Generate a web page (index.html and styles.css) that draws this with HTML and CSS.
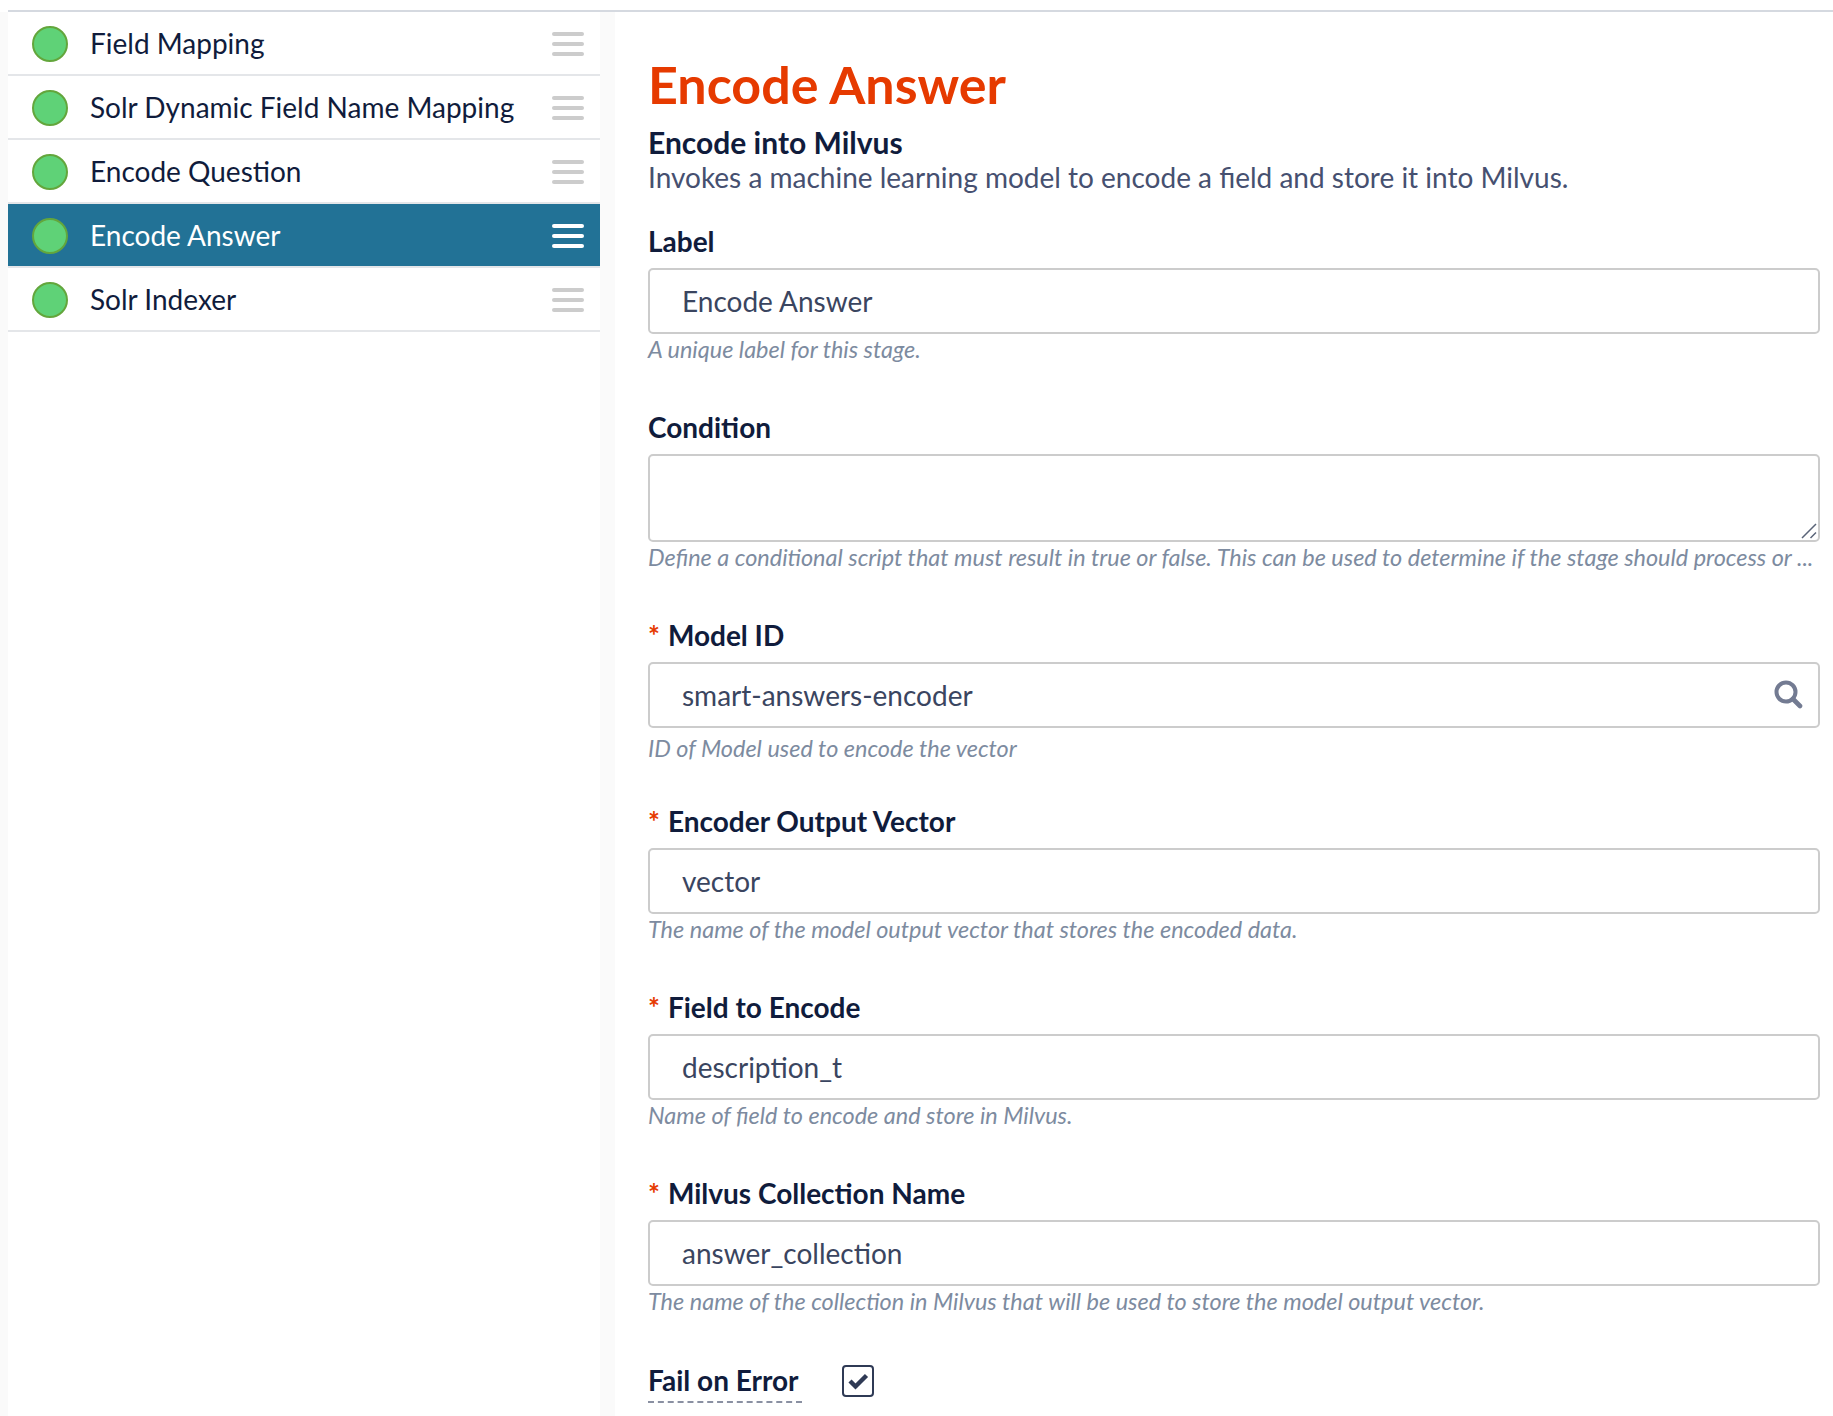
FILE: index.html
```html
<!DOCTYPE html>
<html lang="en">
<head>
    <meta charset="UTF-8">
    <title>Encode Answer</title>
    <link rel="stylesheet" href="styles.css">
</head>
<body>
    <div class="topline"></div>
    <div class="page">
        <div class="sidebar">
            <ul class="stages">
                <li class="stage">
                    <span class="dot"></span>
                    <span class="stage-name">Field Mapping</span>
                    <span class="handle"><i></i><i></i><i></i></span>
                </li>
                <li class="stage">
                    <span class="dot"></span>
                    <span class="stage-name">Solr Dynamic Field Name Mapping</span>
                    <span class="handle"><i></i><i></i><i></i></span>
                </li>
                <li class="stage">
                    <span class="dot"></span>
                    <span class="stage-name">Encode Question</span>
                    <span class="handle"><i></i><i></i><i></i></span>
                </li>
                <li class="stage active">
                    <span class="dot"></span>
                    <span class="stage-name">Encode Answer</span>
                    <span class="handle"><i></i><i></i><i></i></span>
                </li>
                <li class="stage">
                    <span class="dot"></span>
                    <span class="stage-name">Solr Indexer</span>
                    <span class="handle"><i></i><i></i><i></i></span>
                </li>
            </ul>
        </div>
        <div class="main">
            <h1 class="title">Encode Answer</h1>
            <h3 class="subtitle">Encode into Milvus</h3>
            <p class="desc">Invokes a machine learning model to encode a field and store it into Milvus.</p>

            <div class="field">
                <label class="label">Label</label>
                <div class="input">Encode Answer</div>
                <p class="help">A unique label for this stage.</p>
            </div>

            <div class="field">
                <label class="label">Condition</label>
                <div class="input textarea">
                    <svg class="grip" width="16" height="16" viewBox="0 0 16 16">
                        <path d="M1 15 L15 1 M9.5 15 L15 9.5" stroke="#5a6478" stroke-width="1.5" fill="none"/>
                    </svg>
                </div>
                <p class="help">Define a conditional script that must result in true or false. This can be used to determine if the stage should process or ...</p>
            </div>

            <div class="field">
                <label class="label"><span class="req">*</span>Model ID</label>
                <div class="input">
                    smart-answers-encoder
                    <svg class="search" width="30" height="30" viewBox="0 0 30 30">
                        <circle cx="13" cy="13" r="9.5" stroke="#737b92" stroke-width="4" fill="none"/>
                        <path d="M20 20 L27 27" stroke="#737b92" stroke-width="4.6" stroke-linecap="round"/>
                    </svg>
                </div>
                <p class="help low">ID of Model used to encode the vector</p>
            </div>

            <div class="field">
                <label class="label"><span class="req">*</span>Encoder Output Vector</label>
                <div class="input">vector</div>
                <p class="help">The name of the model output vector that stores the encoded data.</p>
            </div>

            <div class="field">
                <label class="label"><span class="req">*</span>Field to Encode</label>
                <div class="input">description_t</div>
                <p class="help">Name of field to encode and store in Milvus.</p>
            </div>

            <div class="field">
                <label class="label"><span class="req">*</span>Milvus Collection Name</label>
                <div class="input">answer_collection</div>
                <p class="help">The name of the collection in Milvus that will be used to store the model output vector.</p>
            </div>

            <div class="check-row">
                <span class="check-label">Fail on Error</span>
                <span class="checkbox">
                    <svg width="22" height="18" viewBox="0 0 22 18">
                        <path d="M3 9 L8.5 14.5 L19.5 3.5" stroke="#2f3a55" stroke-width="4.4" fill="none"/>
                    </svg>
                </span>
            </div>
        </div>
    </div>
</body>
</html>
```

FILE: styles.css
```css
*{
    margin: 0px;
    padding: 0px;
    box-sizing: border-box;
}
html, body{
    height: 100%;
    overflow: hidden;
}
body{
    display: flex;
    flex-direction: column;
    font-family: Lato, "Open Sans", sans-serif;
    font-variant-ligatures: common-ligatures;
    background-color: #ffffff;
    color: #101c3c;
}
.topline{
    height: 12px;
    flex-shrink: 0;
    margin-left: 8px;
    border-bottom: 2px solid #d5d9e0;
}
.page{
    display: flex;
    flex: 1;
    min-height: 0;
    padding-left: 8px;
    background-color: #fafafa;
}
.sidebar{
    width: 607px;
    flex-shrink: 0;
    padding-right: 15px;
}
.stages{
    list-style: none;
    background-color: #ffffff;
    height: 100%;
}
.stage{
    display: flex;
    align-items: center;
    height: 64px;
    padding-top: 2px;
    padding-left: 24px;
    padding-right: 16px;
    border-bottom: 2px solid #e4e6e9;
    font-size: 28px;
    color: #101c3c;
    background-color: #ffffff;
}
.stage.active{
    background-color: #227296;
    color: #ffffff;
}
.dot{
    width: 36px;
    height: 36px;
    border-radius: 50%;
    background-color: #5fd277;
    border: 2px solid #63a63c;
    flex-shrink: 0;
}
.stage-name{
    margin-left: 22px;
    margin-bottom: 2px;
    flex: 1;
}
.handle{
    display: flex;
    flex-direction: column;
    justify-content: space-between;
    width: 32px;
    height: 24px;
}
.handle i{
    display: block;
    height: 4px;
    border-radius: 2px;
    background-color: #cccccc;
}
.active .handle i{
    background-color: #ffffff;
}
.main{
    flex: 1;
    background-color: #ffffff;
    padding-top: 42px;
    padding-left: 33px;
    padding-right: 13px;
}
.title{
    font-size: 52px;
    font-weight: 700;
    line-height: 60px;
    color: #e63a00;
}
.subtitle{
    font-size: 30px;
    font-weight: 700;
    line-height: 36px;
    margin-top: 10px;
}
.desc{
    font-size: 28px;
    line-height: 34px;
    color: #465070;
    margin-bottom: 21px;
}
.field{
    margin-bottom: 36px;
}
.label{
    display: block;
    font-size: 28px;
    font-weight: 700;
    line-height: 53px;
    color: #101c3c;
}
.req{
    color: #e63a00;
    font-size: 28px;
    font-weight: 700;
    line-height: 0;
    margin-right: 8px;
}
.input{
    position: relative;
    height: 66px;
    line-height: 62px;
    padding-left: 32px;
    border: 2px solid #cccccc;
    border-radius: 5px;
    font-size: 28px;
    color: #3a4560;
    background-color: #ffffff;
}
.textarea{
    height: 88px;
}
.grip{
    position: absolute;
    right: 1px;
    bottom: 1px;
}
.search{
    position: absolute;
    right: 15px;
    top: 15px;
}
.help{
    font-size: 23.45px;
    font-style: italic;
    line-height: 31px;
    color: #7d8ba0;
    white-space: nowrap;
}
.help.low{
    margin-top: 5px;
    margin-bottom: -5px;
}
.check-row{
    display: flex;
    align-items: center;
    margin-top: 42px;
}
.check-label{
    font-size: 28px;
    font-weight: 700;
    line-height: 42px;
    border-bottom: 2px dashed #8a90a2;
    width: 154px;
}
.checkbox{
    display: flex;
    align-items: center;
    justify-content: center;
    width: 32px;
    height: 32px;
    margin-left: 40px;
    border: 2px solid #2f3a55;
    border-radius: 4px;
}
```
